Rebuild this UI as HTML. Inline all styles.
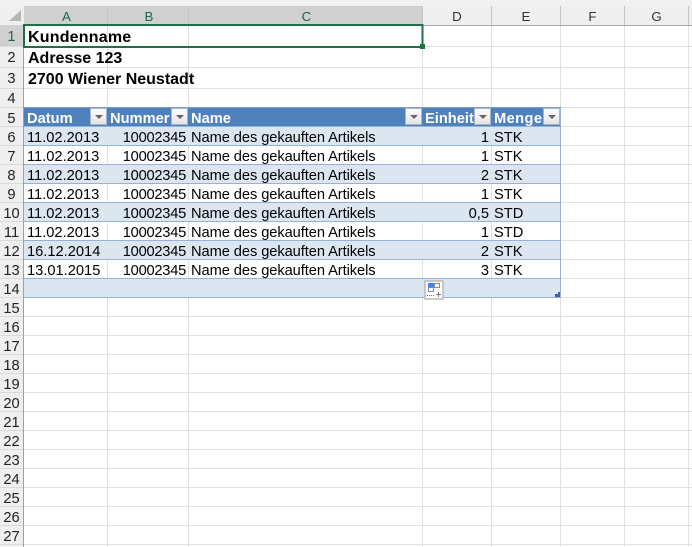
<!DOCTYPE html>
<html><head><meta charset="utf-8">
<style>
html,body{margin:0;padding:0;background:#fff}
#s{position:relative;width:692px;height:547px;overflow:hidden;background:#fff;font-family:"Liberation Sans",sans-serif;font-size:14.67px;color:#000}
#s div{position:absolute}
.t{white-space:nowrap;line-height:19px;height:19px;margin-top:1.5px}
.b{font-weight:bold;font-size:16px;margin-top:1px}
.h{font-weight:bold;color:#fff;font-size:14.67px}
.n{letter-spacing:-.25px}
.a{letter-spacing:-.075px}
.rn{left:0;width:23px;text-align:center;line-height:19px;height:19px;font-size:14.67px;color:#222;margin-top:1.5px}
.e{margin-top:1px}
.cn{top:6px;height:19px;line-height:21px;text-align:center;font-size:13.33px;color:#333}
.f{width:17px;height:17px;top:108px;background:linear-gradient(#fff,#e4e4e4);border:1px solid #aab4c4;box-sizing:border-box}
.f:after{content:"";position:absolute;left:4px;top:6px;border-left:4px solid transparent;border-right:4px solid transparent;border-top:4px solid #666}
</style></head><body>
<div id="s">
<div style="left:0;top:0;width:692px;height:6px;background:#f1f1f1"></div>
<div style="left:0;top:6px;width:692px;height:19px;background:#efefef"></div>
<div style="left:24px;top:6px;width:399px;height:19px;background:#d0d0d0"></div>
<div style="left:0;top:25px;width:24px;height:522px;background:#efefef"></div>
<div style="left:0;top:25px;width:24px;height:22px;background:#d0d0d0"></div>
<svg style="position:absolute;left:0;top:0" width="692" height="547">
<polygon points="9,21 21,21 21,10" fill="#b6b6b6"/>
<g stroke="#e0e0e0" stroke-width="1" fill="none">
<path d="M107.5 25V547M188.5 25V547M422.5 25V547M491.5 25V547M560.5 25V547M624.5 25V547M688.5 25V547"/>
<path d="M24 46.5H692M24 67.5H692M24 88.5H692M24 107.500H692M24 126.5H692M24 145.5H692M24 164.5H692M24 183.5H692M24 202.5H692M24 221.5H692M24 240.5H692M24 259.5H692M24 278.5H692M24 297.5H692M24 316.5H692M24 335.5H692M24 354.5H692M24 373.5H692M24 392.5H692M24 411.5H692M24 430.5H692M24 449.5H692M24 468.5H692M24 487.5H692M24 506.5H692M24 525.5H692M24 544.5H692"/>
<path d="M0 46.5H24M0 67.5H24M0 88.5H24M0 107.5H24M0 126.5H24M0 145.5H24M0 164.5H24M0 183.5H24M0 202.5H24M0 221.5H24M0 240.5H24M0 259.5H24M0 278.5H24M0 297.5H24M0 316.5H24M0 335.5H24M0 354.5H24M0 373.5H24M0 392.5H24M0 411.5H24M0 430.5H24M0 449.5H24M0 468.5H24M0 487.5H24M0 506.5H24M0 525.5H24M0 544.5H24" stroke="#dadada"/>
</g>
<path d="M107.5 6V25M188.5 6V25M422.5 6V25M491.5 6V25M560.5 6V25M624.5 6V25M688.5 6V25" stroke="#c4c4c4" fill="none"/>
<path d="M24 25.5H692" stroke="#a8a8a8"/>
<path d="M23.5 25V547" stroke="#a0a0a0"/>
<rect x="24" y="107" width="537" height="19" fill="#4f81bd"/>
<rect x="24" y="127" width="537" height="18" fill="#dce6f1"/>
<rect x="24" y="165" width="537" height="18" fill="#dce6f1"/>
<rect x="24" y="203" width="537" height="18" fill="#dce6f1"/>
<rect x="24" y="241" width="537" height="18" fill="#dce6f1"/>
<rect x="24" y="279" width="537" height="18" fill="#dce6f1"/>
<path d="M24 126.5H561M24 145.5H561M24 164.5H561M24 183.5H561M24 202.5H561M24 221.5H561M24 240.5H561M24 259.5H561M24 278.5H561M24 297.5H561M560.5 107V298" stroke="#95b3d7" fill="none"/>
<path d="M24 107.5H561" stroke="#7ba0cd"/>
<polygon points="555,297 560,297 560,292 558,292 558,294 555,294" fill="#3f5fa8"/>
<rect x="425" y="281" width="18" height="18" fill="#fff" stroke="#b8b8b8" stroke-width="1.500"/>
<rect x="428" y="283" width="6" height="4" fill="#3b86f0"/>
<rect x="434.5" y="283.5" width="5" height="4" fill="#fff" stroke="#8a8a8a"/>
<rect x="428.5" y="287.5" width="5" height="4" fill="#fff" stroke="#8a8a8a"/>
<path d="M427 295.500h1M429 295.500h1M431 295.500h1M433 295.500h1" stroke="#666"/>
<path d="M436 294.500h5M438.500 292v5" stroke="#777"/>
<rect x="24" y="25" width="398.500" height="22" fill="none" stroke="#1f7145" stroke-width="2"/>
<rect x="420" y="44" width="5" height="5" fill="#1f7145"/>
</svg>
<div class="cn" style="left:25px;width:83px;color:#1e6b45">A</div>
<div class="cn" style="left:109px;width:80px;color:#1e6b45">B</div>
<div class="cn" style="left:190px;width:233px;color:#1e6b45">C</div>
<div class="cn" style="left:423px;width:68px">D</div>
<div class="cn" style="left:492px;width:68px">E</div>
<div class="cn" style="left:561px;width:63px">F</div>
<div class="cn" style="left:625px;width:63px">G</div>
<div class="rn e" style="top:27px;color:#1e6b45">1</div>
<div class="rn e" style="top:48px">2</div>
<div class="rn e" style="top:69px">3</div>
<div class="rn e" style="top:89px">4</div>
<div class="rn" style="top:108px">5</div>
<div class="rn" style="top:127px">6</div>
<div class="rn" style="top:146px">7</div>
<div class="rn" style="top:165px">8</div>
<div class="rn" style="top:184px">9</div>
<div class="rn" style="top:203px">10</div>
<div class="rn" style="top:222px">11</div>
<div class="rn" style="top:241px">12</div>
<div class="rn" style="top:260px">13</div>
<div class="rn" style="top:279px">14</div>
<div class="rn" style="top:298px">15</div>
<div class="rn" style="top:317px">16</div>
<div class="rn" style="top:336px">17</div>
<div class="rn" style="top:355px">18</div>
<div class="rn" style="top:374px">19</div>
<div class="rn" style="top:393px">20</div>
<div class="rn" style="top:412px">21</div>
<div class="rn" style="top:431px">22</div>
<div class="rn" style="top:450px">23</div>
<div class="rn" style="top:469px">24</div>
<div class="rn" style="top:488px">25</div>
<div class="rn" style="top:507px">26</div>
<div class="rn" style="top:526px">27</div>
<div class="t b" style="left:28px;top:27px;letter-spacing:.2px">Kundenname</div>
<div class="t b" style="left:28px;top:48px">Adresse 123</div>
<div class="t b" style="left:28px;top:69px">2700 Wiener Neustadt</div>
<div class="t h" style="left:27px;top:108px">Datum</div>
<div class="t h" style="left:110px;top:108px">Nummer</div>
<div class="t h" style="left:191px;top:108px">Name</div>
<div class="t h" style="left:425px;top:108px">Einheit</div>
<div class="t h" style="left:494px;top:108px;letter-spacing:.4px">Menge</div>
<div class="f" style="left:90px"></div>
<div class="f" style="left:171px"></div>
<div class="f" style="left:405px"></div>
<div class="f" style="left:474px"></div>
<div class="f" style="left:543px"></div>
<div class="t" style="left:27px;top:127px">11.02.2013</div><div class="t n" style="left:107px;width:79px;text-align:right;top:127px">10002345</div><div class="t a" style="left:191px;top:127px">Name des gekauften Artikels</div><div class="t" style="left:423px;width:66px;text-align:right;top:127px">1</div><div class="t" style="left:494px;top:127px">STK</div>
<div class="t" style="left:27px;top:146px">11.02.2013</div><div class="t n" style="left:107px;width:79px;text-align:right;top:146px">10002345</div><div class="t a" style="left:191px;top:146px">Name des gekauften Artikels</div><div class="t" style="left:423px;width:66px;text-align:right;top:146px">1</div><div class="t" style="left:494px;top:146px">STK</div>
<div class="t" style="left:27px;top:165px">11.02.2013</div><div class="t n" style="left:107px;width:79px;text-align:right;top:165px">10002345</div><div class="t a" style="left:191px;top:165px">Name des gekauften Artikels</div><div class="t" style="left:423px;width:66px;text-align:right;top:165px">2</div><div class="t" style="left:494px;top:165px">STK</div>
<div class="t" style="left:27px;top:184px">11.02.2013</div><div class="t n" style="left:107px;width:79px;text-align:right;top:184px">10002345</div><div class="t a" style="left:191px;top:184px">Name des gekauften Artikels</div><div class="t" style="left:423px;width:66px;text-align:right;top:184px">1</div><div class="t" style="left:494px;top:184px">STK</div>
<div class="t" style="left:27px;top:203px">11.02.2013</div><div class="t n" style="left:107px;width:79px;text-align:right;top:203px">10002345</div><div class="t a" style="left:191px;top:203px">Name des gekauften Artikels</div><div class="t" style="left:423px;width:66px;text-align:right;top:203px">0,5</div><div class="t" style="left:494px;top:203px">STD</div>
<div class="t" style="left:27px;top:222px">11.02.2013</div><div class="t n" style="left:107px;width:79px;text-align:right;top:222px">10002345</div><div class="t a" style="left:191px;top:222px">Name des gekauften Artikels</div><div class="t" style="left:423px;width:66px;text-align:right;top:222px">1</div><div class="t" style="left:494px;top:222px">STD</div>
<div class="t" style="left:27px;top:241px">16.12.2014</div><div class="t n" style="left:107px;width:79px;text-align:right;top:241px">10002345</div><div class="t a" style="left:191px;top:241px">Name des gekauften Artikels</div><div class="t" style="left:423px;width:66px;text-align:right;top:241px">2</div><div class="t" style="left:494px;top:241px">STK</div>
<div class="t" style="left:27px;top:260px">13.01.2015</div><div class="t n" style="left:107px;width:79px;text-align:right;top:260px">10002345</div><div class="t a" style="left:191px;top:260px">Name des gekauften Artikels</div><div class="t" style="left:423px;width:66px;text-align:right;top:260px">3</div><div class="t" style="left:494px;top:260px">STK</div>
</div>
</body></html>
